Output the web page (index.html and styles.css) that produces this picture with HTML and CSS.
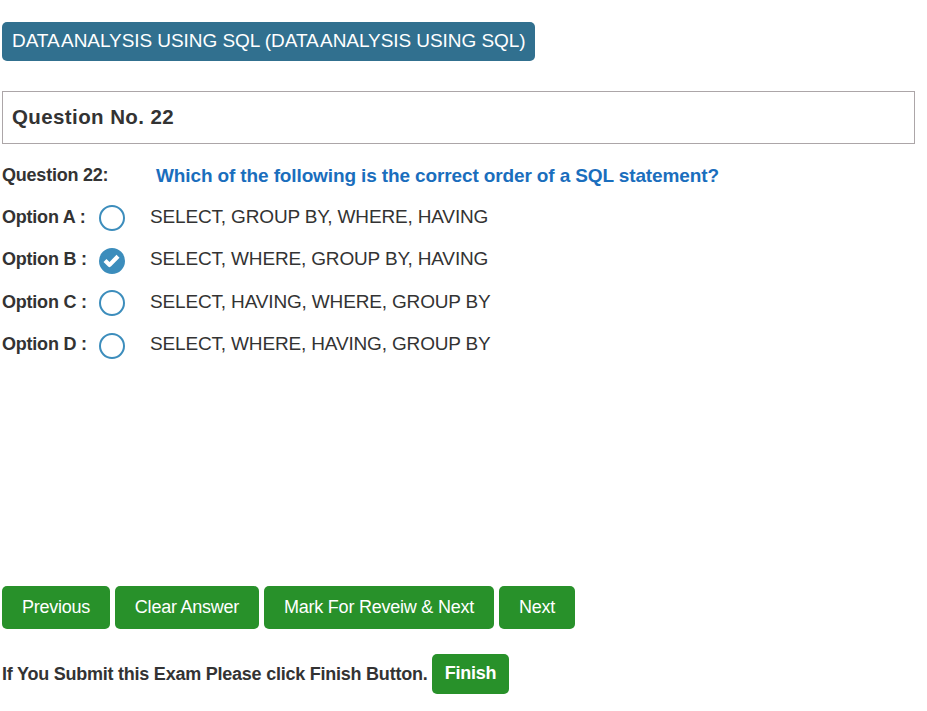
FILE: index.html
```html
<!DOCTYPE html>
<html lang="en">
<head>
<meta charset="utf-8">
<title>Data Analysis Using SQL</title>
<link rel="stylesheet" href="styles.css">
</head>
<body>
<main class="exam">
  <h1 class="subject"><span class="tight">DATA ANALYSIS</span> USING SQL (<span class="tight">DATA ANALYSIS</span> USING SQL)</h1>
  <div class="question-number"><span>Question No. 22</span></div>
  <div class="question"><span class="label">Question 22:</span><span class="question-text">Which of the following is the correct order of a SQL statement?</span></div>
  <div class="options">
    <label class="option"><span class="label">Option A :</span><svg class="radio" viewBox="0 0 26 26"><circle cx="13" cy="13" r="12"/></svg><span class="answer">SELECT, GROUP BY, WHERE, HAVING</span></label>
    <label class="option"><span class="label">Option B :</span><svg class="radio checked" viewBox="0 0 26 26"><circle cx="13" cy="13" r="12"/><path d="M6 12.4l4.6 4.5L19 8.2"/></svg><span class="answer">SELECT, WHERE, GROUP BY, HAVING</span></label>
    <label class="option"><span class="label">Option C :</span><svg class="radio" viewBox="0 0 26 26"><circle cx="13" cy="13" r="12"/></svg><span class="answer">SELECT, HAVING, WHERE, GROUP BY</span></label>
    <label class="option"><span class="label">Option D :</span><svg class="radio low" viewBox="0 0 26 26"><circle cx="13" cy="13" r="12"/></svg><span class="answer">SELECT, WHERE, HAVING, GROUP BY</span></label>
  </div>
  <div class="actions">
    <button class="btn previous">Previous</button>
    <button class="btn clear">Clear Answer</button>
    <button class="btn mark">Mark For Reveiw &amp; Next</button>
    <button class="btn next">Next</button>
  </div>
  <div class="submit"><span class="notice">If You Submit this Exam Please click Finish Button.</span><button class="btn finish">Finish</button></div>
</main>
</body>
</html>
```
FILE: styles.css
```css
* { box-sizing: border-box; }
body {
  margin: 0;
  background: #fff;
  color: #333;
  font-family: "Liberation Sans", Arial, sans-serif;
  font-size: 18px;
}
.exam { padding: 22px 12px 0 2px; white-space: nowrap; }
.subject {
  width: 533px;
  height: 39px;
  margin: 0 0 30px;
  padding-left: 10px;
  border-radius: 5px;
  background: #31708f;
  color: #fff;
  font-size: 19px;
  font-weight: 400;
  line-height: 37px;
  letter-spacing: -0.06px;
}
.tight { word-spacing: -1.7px; }
.question-number {
  height: 53px;
  padding-left: 9px;
  border: 1px solid #aca6a8;
  font-size: 20.5px;
  font-weight: 700;
  line-height: 50px;
  letter-spacing: 0.4px;
}
.question { display: flex; height: 42px; margin-top: 10px; line-height: 42px; }
.label { flex: none; font-weight: 700; letter-spacing: -0.22px; }
.question .label { width: 154px; }
.question-text { color: #1a6ebd; font-size: 19px; font-weight: 700; letter-spacing: -0.125px; line-height: 43px; }
.options { display: grid; grid-template-rows: 42px 43px 42px 43px; }
.option { display: flex; line-height: 42px; }
.option .label { width: 97px; }
.radio { flex: none; width: 26px; height: 26px; margin: 9px 25px 0 0; fill: #fff; stroke: #3c8dbc; stroke-width: 2; }
.radio.checked, .radio.low { margin-top: 10px; }
.radio.checked { fill: #3c8dbc; }
.radio path { fill: none; stroke: #fff; stroke-width: 4.2; stroke-linejoin: round; }
.answer { font-size: 19px; letter-spacing: -0.16px; }
.actions { display: flex; gap: 5px; margin-top: 220px; }
.btn {
  height: 43px;
  padding: 0 0 1px;
  border: 0;
  border-radius: 5px;
  background: #28912a;
  color: #fff;
  font: 18px "Liberation Sans", Arial, sans-serif;
  letter-spacing: -0.23px;
}
.previous { width: 108px; }
.clear { width: 144px; }
.mark { width: 230px; }
.next { width: 76px; }
.submit { display: flex; margin-top: 25px; font-weight: 700; line-height: 40px; }
.notice { width: 430px; letter-spacing: -0.235px; }
.finish { width: 77px; height: 40px; padding-bottom: 2px; font-weight: 700; }
```
